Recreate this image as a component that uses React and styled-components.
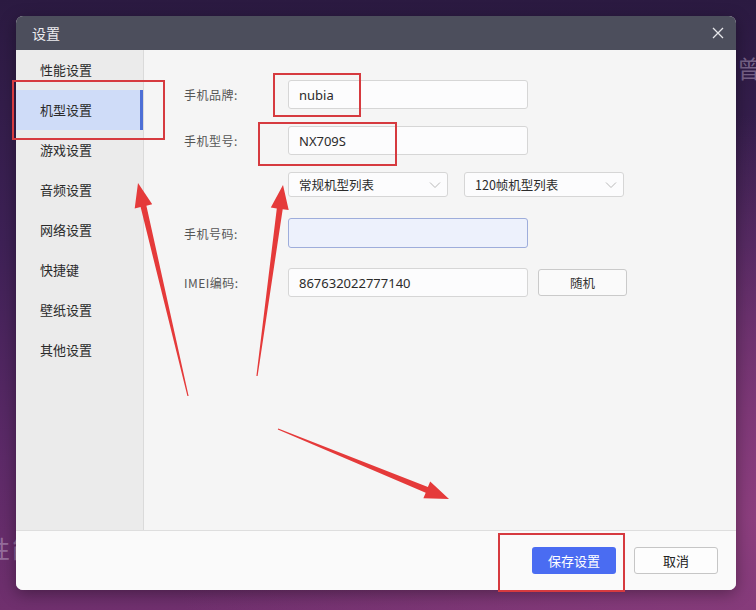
import React from 'react'
import styled, { createGlobalStyle } from 'styled-components'

const GlobalStyle = createGlobalStyle`
  html, body { margin: 0; padding: 0; }
  body {
    font-family: "Noto Sans CJK SC", "Noto Sans", sans-serif;
    width: 756px;
    height: 610px;
    overflow: hidden;
  }
`

const menu = ['性能设置', '机型设置', '游戏设置', '音频设置', '网络设置', '快捷键', '壁纸设置', '其他设置']

// tapered arrow, computed from tail and tip
function arrowPoints(t, p, head = 24, hw = 9, sw = 3) {
  const dx = p[0] - t[0]
  const dy = p[1] - t[1]
  const len = Math.hypot(dx, dy)
  const ux = dx / len, uy = dy / len
  const nx = -uy, ny = ux
  const b = [p[0] - ux * head, p[1] - uy * head]
  const pt = (o, k) => `${(o[0] + nx * k).toFixed(1)},${(o[1] + ny * k).toFixed(1)}`
  return [pt(t, 0.6), pt(b, sw), pt(b, hw), `${p[0]},${p[1]}`, pt(b, -hw), pt(b, -sw), pt(t, -0.6)].join(' ')
}

function Chevron() {
  return (
    <svg width="12" height="8" viewBox="0 0 12 8">
      <path d="M1 1.5 L6 6.5 L11 1.5" fill="none" stroke="#b8b8b8" strokeWidth="1" />
    </svg>
  )
}

function Close() {
  return (
    <svg width="12" height="12" viewBox="0 0 12 12">
      <path d="M1 1 L11 11 M11 1 L1 11" stroke="#e6e6ea" strokeWidth="1.3" />
    </svg>
  )
}

export default function App() {
  return (
    <Desktop>
      <GlobalStyle />
      <GhostText $left="737px" $top="50px">曾谷</GhostText>
      <GhostText $left="-14px" $top="530px">性能</GhostText>
      <Dialog>
        <TitleBar>
          <Title>设置</Title>
          <CloseBtn><Close /></CloseBtn>
        </TitleBar>
        <Body>
          <Sidebar>
            {menu.map((m, i) => (
              <MenuItem key={m} $active={i === 1}>{m}</MenuItem>
            ))}
          </Sidebar>
          <Content>
            <Row $mt="30px">
              <Label>手机品牌:</Label>
              <Input>nubia</Input>
            </Row>
            <Row $mt="17px">
              <Label>手机型号:</Label>
              <Input>NX709S</Input>
            </Row>
            <Row $mt="17px">
              <Label />
              <Selects>
                <Select>常规机型列表<Chevron /></Select>
                <Select>120帧机型列表<Chevron /></Select>
              </Selects>
            </Row>
            <Row $mt="21px">
              <Label>手机号码:</Label>
              <Input $focus />
            </Row>
            <Row $mt="20px">
              <Label>IMEI编码:</Label>
              <Input>867632022777140</Input>
              <SmallBtn>随机</SmallBtn>
            </Row>
          </Content>
        </Body>
        <Footer>
          <PrimaryBtn>保存设置</PrimaryBtn>
          <SecondaryBtn>取消</SecondaryBtn>
        </Footer>
      </Dialog>

      <Mark $x={12} $y={80} $w={153} $h={60} />
      <Mark $x={273} $y={73} $w={88} $h={44} />
      <Mark $x={258} $y={122} $w={139} $h={44} />
      <Mark $x={498} $y={533} $w={127} $h={59} />

      <Arrows width="756" height="610" viewBox="0 0 756 610">
        <polygon points={arrowPoints([188, 396], [138, 183])} fill="#e53a3a" />
        <polygon points={arrowPoints([257, 376], [283, 185])} fill="#e53a3a" />
        <polygon points={arrowPoints([278, 429], [449, 499])} fill="#e53a3a" />
      </Arrows>
    </Desktop>
  )
}

const Desktop = styled.div`
  position: relative;
  width: 756px;
  height: 610px;
  box-sizing: border-box;
  padding: 16px;
  overflow: hidden;
  background:
    radial-gradient(ellipse at 100% 85%, #8c3e7e 0%, rgba(140, 62, 126, 0) 55%),
    linear-gradient(180deg, #2b1a41 0%, #3e2156 40%, #5d2a68 75%, #70306e 100%);
`

const GhostText = styled.div`
  position: absolute;
  left: ${p => p.$left};
  top: ${p => p.$top};
  font-size: 24px;
  white-space: nowrap;
  color: rgba(210, 190, 220, 0.45);
  letter-spacing: 2px;
`

const Dialog = styled.div`
  position: relative;
  width: 720px;
  height: 574px;
  display: flex;
  flex-direction: column;
  border-radius: 7px;
  overflow: hidden;
  background: #f5f5f5;
  box-shadow: 0 4px 16px rgba(0, 0, 0, 0.35);
`

const TitleBar = styled.div`
  height: 34px;
  flex: none;
  display: flex;
  align-items: center;
  justify-content: space-between;
  padding: 0 12px 0 16px;
  background: #4c4e5c;
`

const Title = styled.div`
  color: #ececf0;
  font-size: 14px;
`

const CloseBtn = styled.div`
  display: flex;
  align-items: center;
`

const Body = styled.div`
  flex: 1;
  display: flex;
  min-height: 0;
`

const Sidebar = styled.div`
  width: 127px;
  flex: none;
  background: #ebebeb;
  border-right: 1px solid #dadada;
`

const MenuItem = styled.div`
  height: 40px;
  display: flex;
  align-items: center;
  padding-left: 24px;
  padding-bottom: 2px;
  box-sizing: border-box;
  font-size: 13px;
  color: #2a2a2a;
  background: ${p => (p.$active ? '#cfdcf8' : 'transparent')};
  box-shadow: ${p => (p.$active ? 'inset -3px 0 0 #4d6fd6' : 'none')};
`

const Content = styled.div`
  flex: 1;
  padding-left: 40px;
  display: flex;
  flex-direction: column;
`

const Row = styled.div`
  display: flex;
  align-items: center;
  margin-top: ${p => p.$mt};
`

const Label = styled.div`
  width: 104px;
  flex: none;
  font-size: 12px;
  color: #555;
  letter-spacing: 0.5px;
`

const Input = styled.div`
  width: 240px;
  height: ${p => (p.$focus ? '30px' : '29px')};
  box-sizing: border-box;
  display: flex;
  align-items: center;
  padding-left: 10px;
  border: 1px solid ${p => (p.$focus ? '#9eaddb' : '#d6d6d6')};
  border-radius: 3px;
  background: ${p => (p.$focus ? '#edf1fc' : '#fcfcfd')};
  font-family: "Noto Sans", "Noto Sans CJK SC", sans-serif;
  font-size: 13px;
  color: #2b2b2b;
`

const Selects = styled.div`
  display: flex;
  gap: 16px;
`

const Select = styled.div`
  width: 160px;
  height: 25px;
  box-sizing: border-box;
  display: flex;
  align-items: center;
  justify-content: space-between;
  padding: 0 6px 0 10px;
  border: 1px solid #d6d6d6;
  border-radius: 3px;
  background: #fcfcfd;
  font-size: 12.5px;
  color: #2b2b2b;
`

const SmallBtn = styled.div`
  width: 89px;
  height: 27px;
  margin-left: 10px;
  box-sizing: border-box;
  display: flex;
  align-items: center;
  justify-content: center;
  border: 1px solid #cacaca;
  border-radius: 3px;
  background: #fafafa;
  font-size: 12.5px;
  color: #333;
`

const Footer = styled.div`
  height: 60px;
  flex: none;
  box-sizing: border-box;
  border-top: 1px solid #dedede;
  background: #fafafa;
  display: flex;
  align-items: center;
  justify-content: flex-end;
  gap: 18px;
  padding: 0 18px 0 0;
`

const PrimaryBtn = styled.div`
  width: 84px;
  height: 27px;
  display: flex;
  align-items: center;
  justify-content: center;
  border-radius: 3px;
  background: #4a6cf2;
  color: #fff;
  font-size: 13px;
`

const SecondaryBtn = styled(PrimaryBtn)`
  box-sizing: border-box;
  background: #fdfdfd;
  border: 1px solid #c6c6c6;
  color: #222;
`

const Mark = styled.div`
  position: absolute;
  left: ${p => p.$x}px;
  top: ${p => p.$y}px;
  width: ${p => p.$w}px;
  height: ${p => p.$h}px;
  box-sizing: border-box;
  border: 2.5px solid #d63a3f;
  pointer-events: none;
`

const Arrows = styled.svg`
  position: absolute;
  left: 0;
  top: 0;
  pointer-events: none;
`
